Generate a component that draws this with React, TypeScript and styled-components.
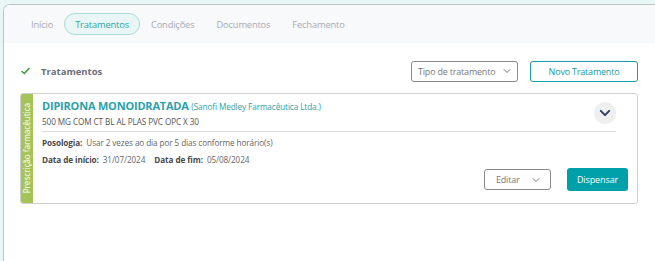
import React from "react";
import styled, { createGlobalStyle } from "styled-components";

const Global = createGlobalStyle`
  html, body { margin: 0; padding: 0; background: #e9f6f6; }
  body { font-family: "Open Sans", "Noto Sans", sans-serif; }
  * { box-sizing: border-box; }
`;

const Page = styled.div`
  padding: 4px 0 0 3px;
  height: 261px;
  overflow: hidden;
`;

const Panel = styled.div`
  border: 1px solid #bfc3c7;
  border-right: none;
  border-bottom: none;
  border-top-left-radius: 7px;
  background: #fff;
  height: 300px;
  overflow: hidden;
`;

const TabBar = styled.div`
  display: flex;
  align-items: center;
  height: 38px;
  background: #f8f9fb;
  padding-left: 16px;
`;

const Tab = styled.div<{ $active?: boolean }>`
  font-size: 9.3px;
  letter-spacing: -0.15px;
  height: 22px;
  display: flex;
  align-items: center;
  padding: 0 10px;
  border-radius: 11px;
  white-space: nowrap;
  color: ${(p) => (p.$active ? "#2aa5a5" : "#a9a9b2")};
  background: ${(p) => (p.$active ? "#eaf6f6" : "transparent")};
  border: 1px solid ${(p) => (p.$active ? "#a9dcd7" : "transparent")};
`;

const Content = styled.div`
  padding: 17px 17px 0 16px;
`;

const HeaderRow = styled.div`
  display: flex;
  align-items: center;
  height: 22px;
`;

const HeaderTitle = styled.div`
  display: flex;
  align-items: center;
  gap: 11px;
  font-size: 9.5px;
  font-weight: 700;
  color: #6b6e73;
  padding-left: 1px;
  flex: 1;
`;

const Select = styled.div<{ $w: number; $pl: number; $pr: number }>`
  width: ${(p) => p.$w}px;
  height: 21px;
  border: 1px solid #8a8a8a;
  border-radius: 3px;
  display: flex;
  align-items: center;
  justify-content: space-between;
  padding: 0 ${(p) => p.$pr}px 0 ${(p) => p.$pl}px;
  font-size: 9px;
  letter-spacing: -0.2px;
  white-space: nowrap;
  color: #7a7a7a;
  background: #fff;
`;

const OutlineButton = styled.div`
  width: 108px;
  height: 21px;
  margin-left: 12px;
  border: 1px solid #199ea6;
  border-radius: 3px;
  display: flex;
  align-items: center;
  justify-content: center;
  font-size: 9px;
  letter-spacing: -0.2px;
  color: #1a9aa2;
`;

const Card = styled.div`
  margin-top: 11px;
  display: flex;
  border: 1px solid #cfcfcf;
  border-radius: 3px;
  height: 111px;
  overflow: hidden;
`;

const Strip = styled.div`
  width: 12px;
  background: #a5c458;
  display: flex;
  align-items: center;
  justify-content: center;
  overflow: hidden;
`;

const StripText = styled.div`
  writing-mode: vertical-rl;
  transform: rotate(180deg);
  font-size: 8.3px;
  letter-spacing: -0.1px;
  line-height: 12px;
  color: #fff;
  white-space: nowrap;
`;

const CardBody = styled.div`
  flex: 1;
  padding: 4px 9px 0 9px;
  display: flex;
  flex-direction: column;
`;

const TopRow = styled.div`
  display: flex;
  align-items: center;
  border-bottom: 1px solid #dcdcdc;
  padding-bottom: 3px;
  margin-right: 12px;
`;

const TitleBlock = styled.div`
  flex: 1;
`;

const Title = styled.div`
  color: #2ba1a8;
  font-size: 11px;
  letter-spacing: -0.2px;
  font-weight: 700;
  line-height: 15px;
  span {
    font-weight: 400;
    font-size: 8.2px;
    letter-spacing: -0.1px;
  }
`;

const Sub = styled.div`
  font-size: 8.2px;
  letter-spacing: -0.1px;
  color: #555;
  line-height: 13px;
  margin-top: 1px;
`;

const Toggle = styled.div`
  width: 22px;
  height: 22px;
  border-radius: 50%;
  background: #efefef;
  display: flex;
  align-items: center;
  justify-content: center;
`;

const Line = styled.div`
  font-size: 8.2px;
  letter-spacing: -0.1px;
  line-height: 12px;
  color: #666;
  margin-top: 5px;
  display: flex;
  gap: 4px;
  white-space: nowrap;
  b {
    color: #4a4a4a;
    font-weight: 700;
  }
`;

const Gap = styled.span`
  width: 1px;
`;

const Actions = styled.div`
  display: flex;
  justify-content: flex-end;
  align-items: center;
  gap: 16px;
  margin-top: 2px;
`;

const PrimaryButton = styled.div`
  width: 61px;
  height: 23px;
  background: #00a0ab;
  border-radius: 3px;
  color: #fff;
  font-size: 9px;
  letter-spacing: -0.1px;
  display: flex;
  align-items: center;
  justify-content: center;
`;

const Chevron = ({ size = 10, color = "#777", w = 1 }: { size?: number; color?: string; w?: number }) => (
  <svg width={size} height={size} viewBox="0 0 10 10" fill="none">
    <path d="M2 3.5 L5 6.5 L8 3.5" stroke={color} strokeWidth={w} strokeLinecap="round" strokeLinejoin="round" />
  </svg>
);

export default function App() {
  return (
    <>
      <Global />
      <Page>
        <Panel>
          <TabBar>
            <Tab>Início</Tab>
            <Tab $active>Tratamentos</Tab>
            <Tab>Condições</Tab>
            <Tab>Documentos</Tab>
            <Tab>Fechamento</Tab>
          </TabBar>
          <Content>
            <HeaderRow>
              <HeaderTitle>
                <svg width="9" height="8" viewBox="0 0 9 8">
                  <path d="M1 4.5 L3.3 6.5 L8 1.5" stroke="#3a9a3a" strokeWidth="1.6" fill="none" strokeLinecap="round" />
                </svg>
                Tratamentos
              </HeaderTitle>
              <Select $w={107} $pl={6} $pr={5}>
                Tipo de tratamento
                <Chevron />
              </Select>
              <OutlineButton>Novo Tratamento</OutlineButton>
            </HeaderRow>
            <Card>
              <Strip>
                <StripText>Prescrição farmacêutica</StripText>
              </Strip>
              <CardBody>
                <TopRow>
                  <TitleBlock>
                    <Title>
                      DIPIRONA MONOIDRATADA <span>(Sanofi Medley Farmacêutica Ltda.)</span>
                    </Title>
                    <Sub>500 MG COM CT BL AL PLAS PVC OPC X 30</Sub>
                  </TitleBlock>
                  <Toggle>
                    <Chevron size={14} color="#2a3f5f" w={1.4} />
                  </Toggle>
                </TopRow>
                <Line>
                  <b>Posologia:</b> Usar 2 vezes ao dia por 5 dias conforme horário(s)
                </Line>
                <Line>
                  <b>Data de início:</b> 31/07/2024 <Gap />
                  <b>Data de fim:</b> 05/08/2024
                </Line>
                <Actions>
                  <Select $w={67} $pl={11} $pr={9}>
                    Editar
                    <Chevron />
                  </Select>
                  <PrimaryButton>Dispensar</PrimaryButton>
                </Actions>
              </CardBody>
            </Card>
          </Content>
        </Panel>
      </Page>
    </>
  );
}
